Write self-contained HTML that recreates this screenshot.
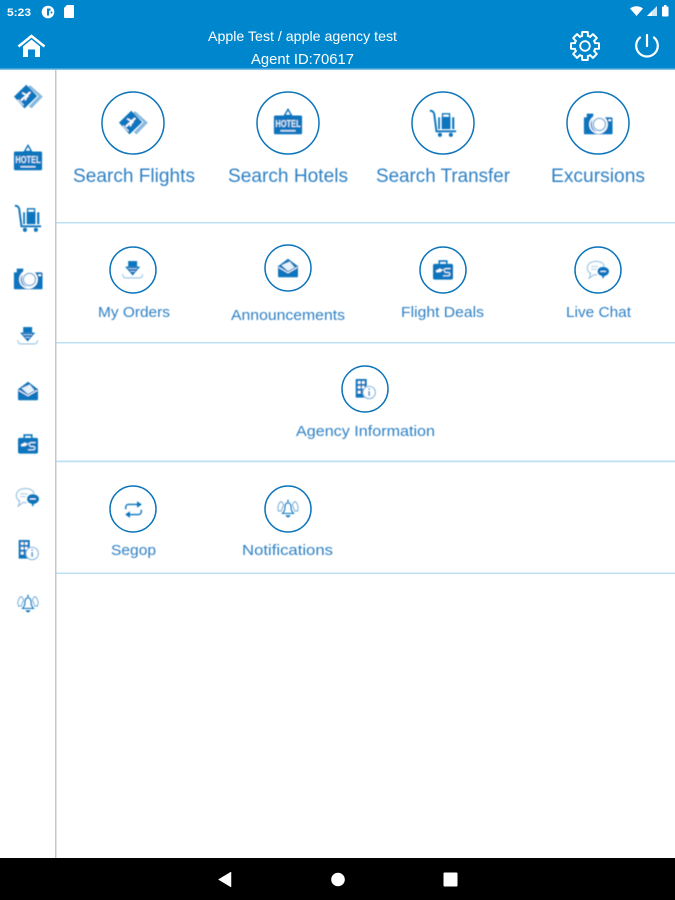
<!DOCTYPE html>
<html lang="en"><head><meta charset="utf-8"><title>Agent Dashboard</title>
<style>
html,body{margin:0;padding:0;width:675px;height:900px;overflow:hidden;background:#fff}
svg{display:block}
text{font-family:"Liberation Sans",sans-serif}
.lab{fill:#2f80c4;text-anchor:start;filter:url(#soft)}
.hd{fill:#fff;filter:url(#softh)}
</style></head><body>
<svg width="675" height="900" viewBox="0 0 675 900" xmlns="http://www.w3.org/2000/svg">
<defs>
<filter id="soft" x="-5%" y="-20%" width="110%" height="140%"><feGaussianBlur stdDeviation="0.4"/></filter>
<filter id="softh" x="-5%" y="-20%" width="110%" height="140%"><feGaussianBlur stdDeviation="0.25"/></filter>
<filter id="ic" x="-10%" y="-10%" width="120%" height="120%"><feGaussianBlur stdDeviation="0.4"/></filter>
<filter id="ring" x="-5%" y="-5%" width="110%" height="110%"><feGaussianBlur stdDeviation="0.2"/></filter>

<!-- all icons drawn in a 32x32 box, centred on 16,16 -->
<symbol id="flight" viewBox="0 0 32 32" overflow="visible">
  <path d="M18.500 2.500L33 15.500 20 29l-3-2.500L28 15 16 4.500z" fill="#86b9de"/>
  <path d="M0 15.500L14 2l12.500 13L12 29z" fill="#0a74bd"/>
  <path d="M8.500 19.500L18 11" stroke="#fff" stroke-width="2.200" stroke-linecap="round"/>
  <path d="M10 11.500l6 3.500M13 19l2.500-5.500" stroke="#fff" stroke-width="1.800" stroke-linecap="round"/>
  <path d="M4.500 19l6.500 6.500" stroke="#cfe4f3" stroke-width="1.600"/>
</symbol>
<symbol id="hotel" viewBox="0 0 32 32" overflow="visible">
  <path d="M16 1.500l-3.800 6.500h7.600z" fill="none" stroke="#0a74bd" stroke-width="1.500"/>
  <rect x="1" y="8" width="30" height="20" rx="1.500" fill="#0a74bd"/>
  <text x="16" y="20.500" font-size="10.500" font-weight="700" fill="#dcecf7" text-anchor="middle" textLength="27" lengthAdjust="spacingAndGlyphs">HOTEL</text>
  <rect x="8" y="23.500" width="16" height="1.600" fill="#cfe4f3"/>
</symbol>
<symbol id="cart" viewBox="0 0 32 32" overflow="visible">
  <path d="M1 2c3.500 0 4.500 1.500 5 4l2.500 19.500H31" fill="none" stroke="#0a74bd" stroke-width="2.200"/>
  <path d="M15.500 9V5.500h8V9" fill="none" stroke="#0a74bd" stroke-width="1.500"/>
  <rect x="14.500" y="9" width="10" height="14" fill="#0a74bd"/>
  <rect x="10.500" y="9.500" width="2" height="13.500" fill="#0a74bd"/>
  <rect x="26.500" y="9.500" width="2.400" height="13.500" fill="#0a74bd"/>
  <circle cx="12.500" cy="29.500" r="2.300" fill="#0a74bd"/><circle cx="25" cy="29.500" r="2.300" fill="#0a74bd"/>
</symbol>
<symbol id="camera" viewBox="0 0 32 32" overflow="visible">
  <path d="M1 10h3V6h7v4h19a1.500 1.500 0 0 1 1.500 1.500V27a1 1 0 0 1-1 1H2a1 1 0 0 1-1-1z" fill="#0a74bd"/>
  <circle cx="16.500" cy="17.500" r="10" fill="#fff"/>
  <path d="M10.500 12a8 8 0 0 0 4 13.500 10 10 0 0 1-4-13.500z" fill="#0a74bd"/>
  <circle cx="17.500" cy="17.500" r="6.500" fill="#fff" stroke="#7fb2da" stroke-width="1.500"/>
  <rect x="27" y="12" width="3" height="2" fill="#fff"/>
</symbol>
<symbol id="down" viewBox="0 0 32 32" overflow="visible">
  <rect x="9" y="3" width="13" height="8" fill="#0a74bd"/>
  <path d="M4.500 11h22L15.500 24z" fill="#0a74bd"/>
  <path d="M9 14h13M12 18h7" stroke="#cfe4f3" stroke-width="1.100"/>
  <path d="M1 22c0 3 2 5.500 4 5.500h21c2 0 4-2.500 4-5.500" fill="none" stroke="#8cbde0" stroke-width="1.400"/>
</symbol>
<symbol id="mail" viewBox="0 0 32 32" overflow="visible">
  <path d="M1.500 13.500L16 2.500l14.500 11V28a1.500 1.500 0 0 1-1.500 1.500H3A1.500 1.500 0 0 1 1.500 28z" fill="#0a74bd"/>
  <path d="M6.500 12l12-5.500 7 8.500-9.500 5.500z" fill="#e6f1f9"/>
  <path d="M2.500 15l13.500 8 13.500-8" fill="none" stroke="#fff" stroke-width="1.300"/>
</symbol>
<symbol id="case" viewBox="0 0 32 32" overflow="visible">
  <path d="M10.500 7V3h11V7" fill="none" stroke="#0a74bd" stroke-width="2.300"/>
  <rect x="1.500" y="7" width="29" height="23" rx="2.500" fill="#0a74bd"/>
  <path d="M5.500 17l6.500-3.500 1 2 4.500-1-5.500 4.500-5.500.5z" fill="#fff"/>
  <path d="M27 14h-6.500a2.500 2.500 0 0 0 0 5.500h3a2.500 2.500 0 0 1 0 5h-7.500" fill="none" stroke="#e6f1f9" stroke-width="1.700"/>
</symbol>
<symbol id="chat" viewBox="0 0 32 32" overflow="visible">
  <path d="M13 3.500c7 0 12 3 12 8M5 21C2 19 .5 16 .5 13c0-5.500 5-9.500 12.500-9.500M5 21l-1.500 6.500L10 23h5" fill="none" stroke="#7fb2da" stroke-width="1.900" stroke-dasharray="1.800 .9"/>
  <path d="M6 11h10M6 15h8" stroke="#a9cce6" stroke-width="1.400"/>
  <path d="M23 11.500c5 0 9 2.700 9 6.500s-3.800 6.500-6.500 6.500L23 29l-1.200-4.500c-3.800-.5-6.300-3.300-6.300-6.500 0-3.800 3.500-6.500 7.500-6.500z" fill="#0a74bd"/>
  <path d="M19.500 18h8" stroke="#fff" stroke-width="1.600"/>
</symbol>
<symbol id="info" viewBox="0 0 32 32" overflow="visible">
  <rect x="2.500" y="1.500" width="16" height="27" fill="#0a74bd"/>
  <path d="M5.500 4.500h4v4h-4zM11.500 4.500h4v4h-4zM5.500 11.500h4v4h-4zM11.500 11.500h4v4h-4zM5.500 18.500h4v4h-4z" fill="#fff"/>
  <circle cx="22" cy="21" r="9" fill="#fff" stroke="#7fb5dc" stroke-width="1.600"/>
  <path d="M22 19v7" stroke="#3d8acb" stroke-width="2.200"/><circle cx="22" cy="16" r="1.300" fill="#3d8acb"/>
</symbol>
<symbol id="bell" viewBox="0 0 32 32" overflow="visible">
  <path d="M16 7c3.500 0 4.500 3.500 4.500 7.500s2 6 3.500 8H8c1.500-2 3.500-4 3.500-8S12.500 7 16 7z" fill="none" stroke="#1f7fc3" stroke-width="1.700"/>
  <path d="M12.500 25c.5 4 6.500 4 7 0z" fill="#0a74bd"/>
  <path d="M14.500 5.500h3L16 1.500z" fill="#0a74bd"/>
  <path d="M2.500 19c-2.500-4-1-10 3-14 2.500 1 3.500 3 4 5.500L6 19zM29.500 19c2.500-4 1-10-3-14-2.500 1-3.500 3-4 5.500l3.500 8.500z" fill="none" stroke="#4a96cf" stroke-width="1.600" stroke-dasharray="1.800 .8"/>
</symbol>
<symbol id="swap" viewBox="0 0 32 32" overflow="visible">
  <path d="M3 15.500V12a4.500 4.500 0 0 1 4.500-4.500H24" fill="none" stroke="#0a74bd" stroke-width="2.400"/>
  <path d="M22 2l8 5.500-8 5.500z" fill="#0a74bd"/>
  <path d="M29 16.500V20a4.500 4.500 0 0 1-4.500 4.500H8" fill="none" stroke="#0a74bd" stroke-width="2.400"/>
  <path d="M10 19l-8 5.500 8 5.500z" fill="#0a74bd"/>
</symbol>
</defs>

<rect width="675" height="900" fill="#fff"/>
<!-- header -->
<rect width="675" height="69" fill="#0086cd"/>
<rect y="68.500" width="675" height="1.500" fill="#7fc0e6"/>

<!-- status bar -->
<text class="hd" x="7" y="16" font-size="11" font-weight="700" textLength="24" lengthAdjust="spacingAndGlyphs">5:23</text>
<circle cx="48" cy="12" r="6.300" fill="#fff"/>
<path d="M47 8.500h3.500v2.200H49v4.800h-2z" fill="#0086cd"/><circle cx="51.500" cy="12.500" r="1" fill="#0086cd"/>
<path d="M67 5h6a1 1 0 0 1 1 1v11a1 1 0 0 1-1 1h-8a1 1 0 0 1-1-1V8z" fill="#fff"/>
<path d="M630 8.500c3.500-3 9.500-3 13 0l-6.500 7.500z" fill="#fff"/>
<path d="M657 6v10h-10z" fill="#cfe6f4"/><path d="M652 11v5h-5z" fill="#fff"/>
<rect x="662" y="6.500" width="6.500" height="10" rx="1" fill="#fff"/><rect x="664" y="5" width="2.500" height="2" fill="#fff"/>

<!-- home -->
<path d="M18.500 46.500L31.500 36 44.500 46.500" fill="none" stroke="#fff" stroke-width="2.600"/>
<path d="M23 46.500L31.500 39.500 40 46.500V57H35v-7.500h-7V57h-5z" fill="#fff"/>

<text class="hd" x="208" y="41" font-size="14" textLength="189" lengthAdjust="spacingAndGlyphs">Apple Test / apple agency test</text>
<text class="hd" x="251" y="64" font-size="14.500" textLength="103" lengthAdjust="spacingAndGlyphs">Agent ID:70617</text>

<!-- gear: outline built from a white gear with a header-blue gear inset -->
<g transform="translate(585 46)">
  <g fill="#fff">
    <rect x="-3.800" y="-15" width="7.600" height="8" rx="1.200"/>
    <rect x="-3.800" y="-15" width="7.600" height="8" rx="1.200" transform="rotate(45)"/>
    <rect x="-3.800" y="-15" width="7.600" height="8" rx="1.200" transform="rotate(90)"/>
    <rect x="-3.800" y="-15" width="7.600" height="8" rx="1.200" transform="rotate(135)"/>
    <rect x="-3.800" y="-15" width="7.600" height="8" rx="1.200" transform="rotate(180)"/>
    <rect x="-3.800" y="-15" width="7.600" height="8" rx="1.200" transform="rotate(225)"/>
    <rect x="-3.800" y="-15" width="7.600" height="8" rx="1.200" transform="rotate(270)"/>
    <rect x="-3.800" y="-15" width="7.600" height="8" rx="1.200" transform="rotate(315)"/>
    <circle r="11.500"/>
  </g>
  <g fill="#0086cd">
    <rect x="-1.900" y="-13" width="3.800" height="6"/>
    <rect x="-1.900" y="-13" width="3.800" height="6" transform="rotate(45)"/>
    <rect x="-1.900" y="-13" width="3.800" height="6" transform="rotate(90)"/>
    <rect x="-1.900" y="-13" width="3.800" height="6" transform="rotate(135)"/>
    <rect x="-1.900" y="-13" width="3.800" height="6" transform="rotate(180)"/>
    <rect x="-1.900" y="-13" width="3.800" height="6" transform="rotate(225)"/>
    <rect x="-1.900" y="-13" width="3.800" height="6" transform="rotate(270)"/>
    <rect x="-1.900" y="-13" width="3.800" height="6" transform="rotate(315)"/>
    <circle r="9.500"/>
  </g>
  <circle r="4.800" fill="none" stroke="#fff" stroke-width="1.800"/>
</g>
<!-- power -->
<path d="M640 37.500a10.800 10.800 0 1 0 14 0" fill="none" stroke="#fff" stroke-width="2.200" stroke-linecap="round"/>
<path d="M647 35v11" stroke="#fff" stroke-width="2.200" stroke-linecap="round"/>

<!-- sidebar line -->
<rect x="55" y="70" width="1.500" height="788" fill="#c4c8cb"/>

<!-- dividers -->
<g fill="#bde0f3">
<rect x="56.500" y="222" width="618.500" height="1.500"/>
<rect x="56.500" y="342" width="618.500" height="1.500"/>
<rect x="56.500" y="460.500" width="618.500" height="1.800"/>
<rect x="56.500" y="572.500" width="618.500" height="1.500"/>
</g>

<!-- sidebar icons -->
<g filter="url(#ic)">
<use href="#flight" x="14" y="83" width="28" height="28"/>
<use href="#hotel" x="13" y="144" width="30" height="30"/>
<use href="#cart" x="14" y="204" width="28" height="28"/>
<use href="#camera" x="13" y="263" width="30" height="30"/>
<use href="#down" x="17" y="325" width="22" height="22"/>
<use href="#mail" x="17" y="380" width="22" height="22"/>
<use href="#case" x="17" y="433" width="22" height="22"/>
<use href="#chat" x="16" y="486" width="23" height="23"/>
<use href="#info" x="17" y="539" width="22" height="22"/>
<use href="#bell" x="17" y="593" width="22" height="22"/>
</g>

<!-- circles -->
<g fill="none" stroke="#0f74ba" stroke-width="1.500" filter="url(#ring)">
<circle cx="133" cy="123" r="31"/><circle cx="288" cy="123" r="31"/><circle cx="443" cy="123" r="31"/><circle cx="598" cy="123" r="31"/>
<circle cx="133" cy="270" r="23"/><circle cx="288" cy="268" r="23"/><circle cx="443" cy="270" r="23"/><circle cx="598" cy="270" r="23"/>
<circle cx="365" cy="389" r="23"/>
<circle cx="133" cy="509" r="23"/><circle cx="288" cy="509" r="23"/>
</g>

<!-- circle icons -->
<g filter="url(#ic)">
<use href="#flight" x="119" y="109" width="28" height="28"/>
<use href="#hotel" x="273" y="108" width="30" height="30"/>
<use href="#cart" x="429" y="109" width="28" height="28"/>
<use href="#camera" x="583" y="108" width="30" height="30"/>
<use href="#down" x="122" y="259" width="22" height="22"/>
<use href="#mail" x="277" y="257" width="22" height="22"/>
<use href="#case" x="432" y="259" width="22" height="22"/>
<use href="#chat" x="587" y="259" width="22" height="22"/>
<use href="#info" x="354" y="378" width="22" height="22"/>
<use href="#swap" x="124" y="500" width="19" height="19"/>
<use href="#bell" x="277" y="498" width="22" height="22"/>
</g>

<!-- labels -->
<text class="lab" x="73" y="182" font-size="19" textLength="122" lengthAdjust="spacingAndGlyphs">Search Flights</text>
<text class="lab" x="228" y="182" font-size="19" textLength="120" lengthAdjust="spacingAndGlyphs">Search Hotels</text>
<text class="lab" x="376" y="182" font-size="19" textLength="134" lengthAdjust="spacingAndGlyphs">Search Transfer</text>
<text class="lab" x="551" y="182" font-size="19" textLength="94" lengthAdjust="spacingAndGlyphs">Excursions</text>
<text class="lab" x="98" y="317" font-size="15" textLength="72" lengthAdjust="spacingAndGlyphs">My Orders</text>
<text class="lab" x="231" y="320" font-size="15" textLength="114" lengthAdjust="spacingAndGlyphs">Announcements</text>
<text class="lab" x="401" y="317" font-size="15" textLength="83" lengthAdjust="spacingAndGlyphs">Flight Deals</text>
<text class="lab" x="566" y="317" font-size="15" textLength="65" lengthAdjust="spacingAndGlyphs">Live Chat</text>
<text class="lab" x="296" y="436" font-size="15" textLength="139" lengthAdjust="spacingAndGlyphs">Agency Information</text>
<text class="lab" x="111" y="555" font-size="15" textLength="45" lengthAdjust="spacingAndGlyphs">Segop</text>
<text class="lab" x="242" y="555" font-size="15" textLength="91" lengthAdjust="spacingAndGlyphs">Notifications</text>

<!-- nav bar -->
<rect y="858" width="675" height="42" fill="#000"/>
<path d="M218.500 879.500l12.500-7.500v15z" fill="#fff" stroke="#fff" stroke-width=".5" stroke-linejoin="round"/>
<circle cx="338" cy="879.500" r="6.800" fill="#fff"/>
<rect x="443.500" y="872.500" width="14" height="14" rx="1" fill="#fff"/>
</svg>
</body></html>
